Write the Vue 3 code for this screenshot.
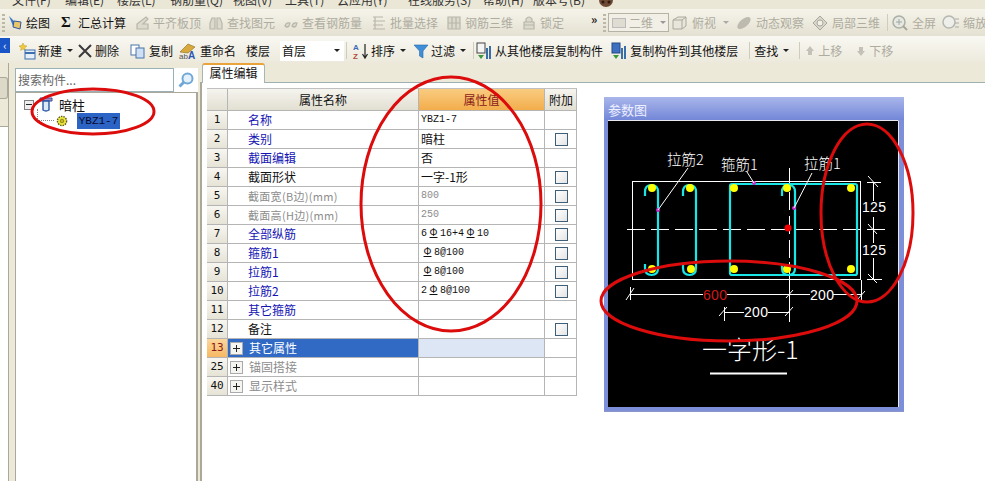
<script setup>
const menus = [
  { label: '文件(F)', w: 53 },
  { label: '编辑(E)', w: 52 },
  { label: '楼层(L)', w: 53 },
  { label: '钢筋量(Q)', w: 63 },
  { label: '视图(V)', w: 52 },
  { label: '工具(T)', w: 52 },
  { label: '云应用(Y)', w: 71 },
  { label: '在线服务(S)', w: 75 },
  { label: '帮助(H)', w: 50 },
  { label: '版本号(B)', w: 65 }
]

const tools1 = [
  { label: '平齐板顶', w: 74, icon: 'M3 15 V10 L12 3 L14 5 L9 10 H14 V15 Z' },
  { label: '查找图元', w: 75, icon: 'M2 15 V9 L4 4 H7 V15 Z M9 15 V4 H12 L14 9 V15 Z' },
  { label: '查看钢筋量', w: 88, icon: 'M2 12 Q3 8 7 9 L6 12 Q4 14 2 12 Z M9 12 Q10 8 14 9 L13 12 Q11 14 9 12 Z' },
  { label: '批量选择', w: 75, icon: 'M2 3 H12 M2 7 H14 M2 11 H12 M2 15 H14 M4 3 V15' },
  { label: '钢筋三维', w: 75, icon: 'M2 3 H14 V15 H2 Z M6 3 V15 M10 3 V15 M2 9 H14' },
  { label: '锁定', w: 70, icon: 'M3 8 H13 V15 H3 Z M5 8 V5 Q8 1 11 5 V8 M3 11 H13' }
]

const rows = [
  { no: 1, name: '名称', value: 'YBZ1-7', kind: 'link', mono: true },
  { no: 2, name: '类别', value: '暗柱', kind: 'link', check: true },
  { no: 3, name: '截面编辑', value: '否', kind: 'link' },
  { no: 4, name: '截面形状', value: '一字-1形', check: true },
  { no: 5, name: '截面宽(B边)(mm)', value: '800', kind: 'off', check: true, small: true, mono: true },
  { no: 6, name: '截面高(H边)(mm)', value: '250', kind: 'off', check: true, small: true, mono: true },
  { no: 7, name: '全部纵筋', value: '6Φ16+4Φ10', kind: 'link', check: true, mono: true },
  { no: 8, name: '箍筋1', value: 'Φ8@100', kind: 'link', check: true, mono: true },
  { no: 9, name: '拉筋1', value: 'Φ8@100', kind: 'link', check: true, mono: true },
  { no: 10, name: '拉筋2', value: '2Φ8@100', kind: 'link', check: true, mono: true },
  { no: 11, name: '其它箍筋', value: '', kind: 'link' },
  { no: 12, name: '备注', value: '', check: true },
  { no: 13, name: '其它属性', value: '', kind: 'active', plus: true },
  { no: 25, name: '锚固搭接', value: '', kind: 'off', plus: true },
  { no: 40, name: '显示样式', value: '', kind: 'off', plus: true }
]

const hookX = [645, 683, 782]
const hookPath = (x) => {
  const r = x + 13
  const m = x + 6.5
  return `M${x} 196 V192 Q${x} 185 ${m} 185 Q${r} 185 ${r} 192 V268 Q${r} 275 ${m} 275 Q${x} 275 ${x} 268 V264`
}
const yellowDots = [
  [652, 188], [690, 188], [734, 188], [787, 188], [851, 188],
  [652, 269], [691, 269], [734, 269], [787, 269], [851, 269]
]
const pinkDots = [[658, 210], [754, 183], [794, 208]]
</script>

<template>
  <div class="app">
    <div class="menubar">
      <span v-for="m in menus" :key="m.label" :style="{ width: m.w + 'px' }">{{ m.label }}</span>
      <svg width="16" height="9" viewBox="0 0 16 9"><circle cx="8" cy="0" r="7" fill="#6e4a34" /><circle cx="5" cy="2" r="1.5" fill="#2c1a10" /><circle cx="11" cy="2" r="1.5" fill="#2c1a10" /></svg>
    </div>

    <div class="toolbar first">
      <span class="grip"></span>
      <span class="tool draw">
        <svg width="18" height="18" viewBox="0 0 18 18"><path d="M2 2 L9 9 L6 12 Z" fill="#3a78c8" /><path d="M7 7 L14 8 L13 15 L6 13 Z" fill="#e9c66a" stroke="#33559a" /></svg>
        绘图
      </span>
      <span class="tool sum"><b>Σ</b>汇总计算</span>
      <span v-for="t in tools1" :key="t.label" class="tool off" :style="{ width: t.w + 'px' }">
        <svg width="16" height="18" viewBox="0 0 16 18"><path :d="t.icon" fill="#dcdacd" stroke="#b8b6aa" stroke-width="1.2" /></svg>
        {{ t.label }}
      </span>
      <span class="chevron">»</span>
      <span class="grip dotted"></span>
      <span class="combo"><i></i>二维<em></em></span>
      <span class="tool off t-top">
        <svg width="18" height="18" viewBox="0 0 18 18"><path d="M2 6 L7 3 H15 V12 L11 15 H2 Z M2 6 H11 V15 M11 6 L15 3" fill="#e8e6dc" stroke="#aaa89c" /></svg>
        俯视<em class="caret"></em>
      </span>
      <span class="tool off t-orbit">
        <svg width="18" height="18" viewBox="0 0 18 18"><ellipse cx="9" cy="9" rx="8" ry="4" transform="rotate(-40 9 9)" fill="#bdbbaf" /></svg>
        动态观察
      </span>
      <span class="tool off t-local">
        <svg width="18" height="18" viewBox="0 0 18 18"><path d="M9 2 L16 9 L9 16 L2 9 Z" fill="#d8d6cc" stroke="#aaa89c" /><circle cx="9" cy="9" r="3" fill="#f2f0e6" stroke="#aaa89c" /></svg>
        局部三维
      </span>
      <span class="sep"></span>
      <span class="tool off t-full">
        <svg width="18" height="18" viewBox="0 0 18 18"><circle cx="8" cy="8" r="6" fill="#e8e8e0" stroke="#a9b0a8" stroke-width="1.5" /><path d="M8 5 V11 M5 8 H11" stroke="#9aa" /><path d="M12 12 L16 16" stroke="#a9a79a" stroke-width="2" /></svg>
        全屏
      </span>
      <span class="tool off">
        <svg width="18" height="18" viewBox="0 0 18 18"><circle cx="7" cy="8" r="6" fill="#eeeeea" stroke="#b4b8b0" stroke-width="1.5" /><path d="M13 5 H17 M13 9 H17 M13 13 H17" stroke="#aaa" /></svg>
        缩放
      </span>
    </div>

    <div class="toolbar second">
      <span class="collapse">‹</span>
      <span class="actions">
        <span class="tool new">
          <svg width="18" height="18" viewBox="0 0 18 18"><path d="M5 1 L6.2 3.5 L9 4 L6.8 5.8 L7.2 8.4 L5 7 L2.6 8.4 L3.2 5.8 L1 4 L3.8 3.5 Z" fill="#f1c93f" stroke="#b99a2a" stroke-width=".5" /><rect x="7" y="8" width="10" height="9" fill="#e6eef8" stroke="#3b6fae" /><path d="M7 11 H17" stroke="#3b6fae" stroke-width="2" /></svg>
          新建<em class="caret dark"></em>
        </span>
        <span class="tool del">
          <svg width="16" height="18" viewBox="0 0 16 18"><path d="M2 3 L14 15 M14 3 L2 15" stroke="#3a3a3a" stroke-width="2" /></svg>
          删除
        </span>
        <span class="tool copy">
          <svg width="18" height="18" viewBox="0 0 18 18"><rect x="2" y="3" width="8" height="10" fill="#fff" stroke="#4a74a8" /><rect x="7" y="6" width="8" height="10" fill="#cfe0f4" stroke="#4a74a8" /></svg>
          复制
        </span>
        <span class="tool">
          <svg width="20" height="18" viewBox="0 0 20 18"><path d="M2 10 L10 2 L17 5 L10 11 Z" fill="#d8a93c" stroke="#8a6a20" stroke-width=".6" /><text x="1" y="17" class="icon-letter">ab</text><text x="10" y="17" class="icon-letter blue">A</text></svg>
          重命名
        </span>
        <span class="floor-label">楼层</span>
        <span class="floor-select">首层<em class="caret dark"></em></span>
        <span class="sep wide"></span>
        <span class="tool sort">
          <svg width="16" height="18" viewBox="0 0 16 18"><text x="0" y="8" class="az a">A</text><text x="0" y="17" class="az z">Z</text><path d="M12 2 V15 M9.5 12 L12 16 L14.5 12" stroke="#222" fill="none" stroke-width="1.2" /></svg>
          排序<em class="caret dark"></em>
        </span>
        <span class="tool">
          <svg width="16" height="18" viewBox="0 0 16 18"><path d="M1 3 H15 L10 9 V16 L6.5 14 V9 Z" fill="#3e8fd8" stroke="#2a6aa8" stroke-width=".6" /></svg>
          过滤<em class="caret dark"></em>
        </span>
        <span class="sep tight"></span>
        <span class="tool from">
          <svg width="18" height="18" viewBox="0 0 18 18"><rect x="2" y="1" width="8" height="10" fill="#f4f4f4" stroke="#444" /><path d="M3 13 H9 L6 17 Z" fill="#3a9a3a" /><path d="M12 6 V17 M15 4 V17" stroke="#3a6ea8" stroke-width="2" /></svg>
          从其他楼层复制构件
        </span>
        <span class="tool from">
          <svg width="18" height="18" viewBox="0 0 18 18"><rect x="2" y="1" width="8" height="10" fill="#3f6fc0" stroke="#234a88" /><path d="M3 13 H9 L6 17 Z" fill="#3a9a3a" /><path d="M12 6 V17 M15 4 V17" stroke="#3a6ea8" stroke-width="2" /></svg>
          复制构件到其他楼层
        </span>
        <span class="sep"></span>
        <span class="tool">查找<em class="caret dark"></em></span>
        <span class="sep"></span>
        <span class="tool off up">
          <svg width="12" height="18" viewBox="0 0 12 18"><path d="M6 4 L10 9 H8 V13 H4 V9 H2 Z" fill="#c4c2b8" /></svg>
          上移
        </span>
        <span class="tool off">
          <svg width="12" height="18" viewBox="0 0 12 18"><path d="M6 14 L10 9 H8 V5 H4 V9 H2 Z" fill="#c4c2b8" /></svg>
          下移
        </span>
      </span>
    </div>

    <div class="main">
      <aside class="edge">
        <div class="edge-top"><span class="edge-btn"></span></div>
        <div class="edge-list"></div>
      </aside>

      <section class="side">
        <div class="search">
          <span class="search-input">搜索构件...</span>
          <span class="search-btn">
            <svg width="18" height="18" viewBox="0 0 18 18"><circle cx="10.5" cy="7.5" r="5" fill="#e4f1fb" stroke="#6fa8d6" stroke-width="2" /><path d="M7 11 L2.5 15.5" stroke="#6fa8d6" stroke-width="3" /></svg>
          </span>
        </div>
        <div class="tree">
          <div class="node">
            <span class="minus"></span>
            <svg width="14" height="15" viewBox="0 0 14 15"><path d="M1 1 H13 V4 H1 Z" fill="#a98cc8" stroke="#3c4f9a" /><path d="M4 4 H10 V13 Q7 15 4 13 Z" fill="#dceaf8" stroke="#2a56a0" stroke-width="1.4" /></svg>
            <span class="node-name">暗柱</span>
          </div>
          <div class="node leaf">
            <span class="dots"></span>
            <svg width="12" height="12" viewBox="0 0 12 12"><circle cx="6" cy="6" r="4.6" fill="#f2e83a" stroke="#5b5a1e" stroke-width="1.4" stroke-dasharray="1.5 1" /><circle cx="6" cy="6" r="1.8" fill="#c8bd20" stroke="#5b5a1e" stroke-width=".6" /></svg>
            <span class="leaf-name">YBZ1-7</span>
          </div>
        </div>
      </section>

      <section class="content">
        <div class="tabs"><span class="tab">属性编辑</span></div>
        <div class="tab-body">
          <div class="grid">
            <div class="row head">
              <span class="no"></span>
              <span class="name">属性名称</span>
              <span class="val">属性值</span>
              <span class="add">附加</span>
            </div>
            <div v-for="r in rows" :key="r.no" class="row" :class="r.kind">
              <span class="no">{{ r.no }}</span>
              <span class="name">
                <i v-if="r.plus" class="plus"></i>
                <span :class="{ tiny: r.small }">{{ r.name }}</span>
              </span>
              <span class="val" :class="{ mono: r.mono }">
                <template v-for="(part, i) in r.value.split('Φ')" :key="i"><b v-if="i" class="steel">Φ</b>{{ part }}</template>
              </span>
              <span class="add"><i v-if="r.check" class="check"></i></span>
            </div>
          </div>

          <div class="figure">
            <div class="figure-title">参数图</div>
            <svg class="figure-canvas" width="291" height="287" viewBox="608 120 291 287">
              <rect x="608" y="120" width="291" height="287" fill="#000" />
              <path d="M608 120.5 H898.5 V407" fill="none" stroke="#e8e8f0" />
              <rect x="632.5" y="181.5" width="228" height="98" fill="none" stroke="#fff" />
              <path d="M627 229.5 H885" stroke="#fff" stroke-dasharray="18 6" />
              <path d="M789.5 168 V262" stroke="#fff" stroke-dasharray="18 6" />
              <path d="M789.5 262 V322" stroke="#fff" />
              <g fill="none" stroke="#19e6e6" stroke-width="2.2">
                <path v-for="x in hookX" :key="x" :d="hookPath(x)" />
                <rect x="730" y="184" width="127" height="91" rx="2" />
              </g>
              <circle v-for="(p, i) in yellowDots" :key="'y' + i" :cx="p[0]" :cy="p[1]" r="4" fill="#ffff00" />
              <circle v-for="(p, i) in pinkDots" :key="'p' + i" :cx="p[0]" :cy="p[1]" r="2" fill="#c828c8" />
              <circle cx="788" cy="228" r="3.5" fill="#f00000" />
              <g stroke="#fff" fill="none">
                <path d="M658 210 L688 168" />
                <path d="M754 183 L747 172" />
                <path d="M794 208 L812 173" />
                <path d="M867 182.5 H881 M873.5 182 V201 M868 176 L878 187" />
                <path d="M873.5 217 V243 M867 229.5 H885 M868 224 L877 234" />
                <path d="M873.5 258 V279 M867 279.5 H882 M868 274 L877 283" />
                <path d="M630 294.5 H703 M727 294.5 H810 M833 294.5 H861" />
                <path d="M630.5 287 V300 M626 300 L634 288 M786 298 L793 290 M861.5 280 V300 M857 300 L865 291" />
                <path d="M724 312.5 H744 M768 312.5 H789" />
                <path d="M724.5 307 V321 M719 316 L727 307 M785 316 L793 307" />
              </g>
              <path d="M710 373.5 H787" stroke="#fff" stroke-width="2" />
              <text x="667" y="165" class="cad">拉筋2</text>
              <text x="721" y="170" class="cad">箍筋1</text>
              <text x="804" y="169" class="cad">拉筋1</text>
              <text x="862" y="212" class="cad num">125</text>
              <text x="862" y="255" class="cad num">125</text>
              <text x="703" y="300" class="cad num red">600</text>
              <text x="810" y="300" class="cad num">200</text>
              <text x="744" y="317" class="cad num">200</text>
              <text x="702" y="359" class="cad title">一字形-1</text>
            </svg>
          </div>
        </div>
      </section>
    </div>

    <svg class="marks" width="985" height="481" viewBox="0 0 985 481">
      <g fill="none" stroke="#dc0c0c" stroke-width="3">
        <ellipse cx="93" cy="111.5" rx="61" ry="22.5" />
        <ellipse cx="451" cy="204" rx="90" ry="127" />
        <ellipse cx="867" cy="213" rx="46" ry="89" />
        <ellipse cx="729" cy="301" rx="128" ry="40" />
      </g>
    </svg>
  </div>
</template>

<style>
html, body {
  margin: 0;
  background: #fff;
}
</style>

<style scoped>
.app {
  position: relative;
  width: 985px;
  height: 481px;
  overflow: hidden;
  background: #ece9d8;
  font-family: "Noto Sans CJK SC", "Liberation Sans", sans-serif;
  font-size: 12px;
  color: #111;
  display: flex;
  flex-direction: column;
}

.menubar {
  height: 9px;
  flex: none;
  display: flex;
  padding-left: 12px;
  background: #ebe7d6;
  line-height: 0;
  overflow: hidden;
  color: #333;
  white-space: nowrap;
}

.menubar span {
  flex: none;
}

.toolbar {
  display: flex;
  flex: none;
  align-items: center;
  white-space: nowrap;
  overflow: hidden;
  height: 27px;
  box-sizing: border-box;
}

.toolbar.first {
  background: linear-gradient(#f6f4ea, #e4e1d2);
  padding-left: 2px;
}

.toolbar.second {
  background: linear-gradient(#f9f8f2, #ece9dc);
  padding-top: 2px;
}

.grip {
  width: 3px;
  height: 18px;
  margin-right: 2px;
  flex: none;
  background: repeating-linear-gradient(#bbb8a8 0 2px, transparent 2px 4px);
}

.tool {
  display: inline-flex;
  align-items: center;
  gap: 3px;
  box-sizing: border-box;
  flex: none;
}

.tool.off {
  color: #aeac9f;
}

.draw {
  width: 54px;
  gap: 1px;
}

.sum {
  width: 73px;
  gap: 0;
}

.sum b {
  width: 17px;
  font-family: "Liberation Serif", serif;
  font-size: 15px;
}

.chevron {
  width: 12px;
  flex: none;
  font-size: 12px;
  font-weight: bold;
  margin-top: -8px;
  color: #222;
}

.combo {
  width: 61px;
  height: 19px;
  flex: none;
  border: 1px solid #b5b3a6;
  display: inline-flex;
  align-items: center;
  gap: 3px;
  margin-right: 2px;
  color: #aeac9f;
  background: #f1efe6;
  box-sizing: border-box;
}

.combo i {
  width: 12px;
  height: 8px;
  margin-left: 3px;
  background: #dfddd2;
  border: 1px solid #bbb;
}

.combo em {
  margin-left: 4px;
  border: 3px solid transparent;
  border-top-color: #999;
  margin-top: 3px;
}

.t-top {
  width: 64px;
}

.t-orbit {
  width: 76px;
}

.t-local {
  width: 73px;
}

.t-full {
  width: 51px;
}

.caret {
  display: inline-block;
  border: 3px solid transparent;
  border-top-color: #aaa;
  margin: 3px 0 0 4px;
}

.caret.dark {
  border-top-color: #222;
  margin-left: 3px;
}

.sep {
  width: 1px;
  height: 17px;
  background: #cfccbc;
  flex: none;
  margin: 0 3px;
}

.actions .sep {
  margin: 0 4px;
}

.actions .sep.wide {
  margin: 0 6px 0 2px;
}

.actions .sep.tight {
  margin: 0 1px;
}

.collapse {
  width: 10px;
  height: 15px;
  align-self: flex-start;
  flex: none;
  background: #1a55c8;
  color: #fff;
  font-size: 11px;
  line-height: 14px;
  text-align: center;
}

.actions {
  display: flex;
  align-items: center;
  padding-left: 8px;
}

.actions .tool {
  padding-right: 6px;
  gap: 2px;
}

.actions .tool.new {
  padding-right: 4px;
}

.actions .tool.del {
  padding-right: 10px;
}

.actions .tool.copy {
  padding-right: 5px;
}

.actions .tool.sort {
  padding-right: 7px;
}

.actions .tool.from {
  padding-right: 7px;
}

.actions .tool.up {
  padding-right: 13px;
}

.icon-letter {
  font: 8px "Liberation Sans", sans-serif;
  fill: #555;
}

.icon-letter.blue {
  font: bold 10px "Liberation Sans", sans-serif;
  fill: #2a56b0;
}

.az {
  font: bold 8px "Liberation Sans", sans-serif;
}

.az.a {
  fill: #3a6ab8;
}

.az.z {
  fill: #b04a3a;
}

.floor-label {
  margin: 0 10px 0 4px;
  flex: none;
}

.floor-select {
  width: 64px;
  height: 20px;
  background: #fff;
  padding: 0 4px 0 2px;
  box-sizing: border-box;
  display: flex;
  align-items: center;
  justify-content: space-between;
  flex: none;
}

.main {
  flex: 1;
  display: flex;
  min-height: 0;
}

.edge {
  width: 9px;
  flex: none;
  display: flex;
  flex-direction: column;
  border-right: 1px solid #aca899;
  box-sizing: border-box;
}

.edge-top {
  height: 64px;
  padding-top: 14px;
  box-sizing: border-box;
  border-bottom: 1px solid #aca899;
}

.edge-btn {
  display: block;
  height: 20px;
  background: #dcd9c8;
  border: 1px solid #aca899;
  border-left: 0;
  border-radius: 0 3px 3px 0;
}

.edge-list {
  flex: 1;
  background: #fff;
}

.side {
  width: 183px;
  margin-left: 6px;
  flex: none;
  display: flex;
  flex-direction: column;
  padding-top: 5px;
}

.search {
  height: 24px;
  flex: none;
  display: flex;
  background: #fff;
}

.search-input {
  flex: 1;
  border: 1px solid #9cb0b8;
  color: #666;
  line-height: 21px;
  padding-left: 2px;
}

.search-btn {
  width: 24px;
  display: flex;
  align-items: center;
  justify-content: center;
}

.tree {
  flex: 1;
  background: #fff;
  border: 1px solid #aca899;
  border-width: 1px 2px 0 1px;
  padding: 3px 0 0 8px;
}

.node {
  display: flex;
  align-items: center;
  height: 17px;
  gap: 5px;
}

.minus {
  width: 8px;
  height: 8px;
  border: 1px solid #808080;
  background: linear-gradient(90deg, transparent 1px, #222 1px 7px, transparent 7px) center / 100% 1px no-repeat, #eee;
}

.node-name {
  margin-left: 1px;
  font-size: 13px;
}

.leaf {
  padding-left: 13px;
  gap: 2px;
  height: 16px;
}

.dots {
  width: 16px;
  height: 11px;
  margin-top: -12px;
  border-left: 1px dotted #888;
  border-bottom: 1px dotted #888;
}

.leaf-name {
  background: #2b64c4;
  color: #0a0a30;
  font: 11px "Liberation Mono", monospace;
  height: 16px;
  line-height: 16px;
  width: 43px;
  text-align: center;
  margin-left: 7px;
}

.content {
  flex: 1;
  min-width: 0;
  margin-left: 2px;
  display: flex;
  flex-direction: column;
  background: #ece9d8;
}

.tabs {
  height: 19px;
  flex: none;
  padding-left: 2px;
}

.tab {
  display: inline-block;
  width: 63px;
  height: 20px;
  line-height: 16px;
  background: #fff;
  text-align: center;
  border: 1px solid #a9b4b4;
  border-top: 2px solid #e8a33a;
  border-bottom: 0;
  border-radius: 3px 3px 0 0;
  box-sizing: border-box;
  position: relative;
  z-index: 1;
}

.tab-body {
  flex: 1;
  background: #fff;
  border-top: 1px solid #9fb0b0;
  border-left: 2px solid #aca899;
  display: flex;
  align-items: flex-start;
  padding: 5px 0 0 5px;
}

.grid {
  width: 370px;
  flex: none;
  border-top: 1px solid #c0c0c0;
}

.row {
  display: grid;
  grid-template-columns: 21px 191px 126px 32px;
  height: 19px;
  box-sizing: border-box;
  border-bottom: 1px solid #b5b5b5;
  line-height: 18px;
}

.row.head {
  height: 22px;
  line-height: 21px;
  text-align: center;
  background: linear-gradient(#f5f4ee, #e2dfd2);
}

.row.head .name {
  padding-left: 0;
  justify-content: center;
}

.row.head .val {
  background: linear-gradient(#f9cc80, #f3ad4c);
  color: #8a1a1a;
  padding-left: 0;
  text-align: center;
}

.row > span {
  border-right: 1px solid #b5b5b5;
  box-sizing: border-box;
}

.no {
  background: linear-gradient(#f7f6f0, #e6e3d6);
  text-align: center;
  font: 11px/18px "DejaVu Sans Mono", monospace;
}

.head .no,
.head .add {
  background: linear-gradient(#f5f4ee, #e2dfd2);
}

.name {
  padding-left: 20px;
  display: flex;
  align-items: center;
}

.val {
  padding-left: 2px;
  overflow: hidden;
  white-space: nowrap;
}

.val.mono {
  font: 10px/18px "Liberation Mono", "Noto Sans CJK SC", monospace;
}

.steel {
  display: inline-block;
  width: 11px;
  margin: 0 1px;
  height: 11px;
  line-height: 10px;
  font: 400 10px/10px "Liberation Sans", sans-serif;
  text-align: center;
  text-decoration: underline;
}

.add {
  display: flex;
  align-items: center;
  justify-content: center;
  padding-left: 1px;
}

.check {
  width: 11px;
  height: 11px;
  border: 1px solid #3f5f78;
  background: linear-gradient(135deg, #fff, #e4e4e4);
}

.row.link .name {
  color: #1414b4;
}

.row.off .name,
.row.off .val {
  color: #8c8c8c;
}

.tiny {
  font-size: 11px;
  letter-spacing: .3px;
}

.row.active .no {
  background: linear-gradient(#fcd79c, #f6b863);
  color: #8a1a1a;
}

.row.active .name {
  background: #316ac5;
  color: #fff;
}

.row.active .val {
  background: #dce6f5;
}

.plus {
  width: 11px;
  height: 11px;
  margin: 0 6px 0 -18px;
  border: 1px solid #aaa;
  background:
    linear-gradient(#222, #222) center / 7px 1px no-repeat,
    linear-gradient(#222, #222) center / 1px 7px no-repeat,
    #f4f4f0;
  flex: none;
}

.figure {
  width: 300px;
  height: 315px;
  margin-left: 27px;
  margin-top: 9px;
  box-sizing: border-box;
  flex: none;
  background: #7d8fd8;
  padding: 0 5px 4px 4px;
  border-bottom: 1px solid #8a96c8;
}

.figure-title {
  height: 23px;
  line-height: 25px;
  color: #eef0ff;
  font-size: 13px;
  background: linear-gradient(#a9b6ea, #7387d8);
  margin: 0 -5px 0 -4px;
  padding-left: 4px;
}

.figure-canvas {
  display: block;
}

.cad {
  font-family: "Noto Sans CJK SC", sans-serif;
  font-size: 14.5px;
  font-weight: 300;
  fill: #fff;
}

.cad.num {
  font-family: "Liberation Sans", sans-serif;
  font-size: 14px;
  letter-spacing: .3px;
  font-weight: 400;
}

.cad.red {
  fill: #d01818;
}

.cad.title {
  font-size: 25px;
  font-weight: 300;
}

.marks {
  position: absolute;
  top: 0;
  left: 0;
  pointer-events: none;
}
</style>
